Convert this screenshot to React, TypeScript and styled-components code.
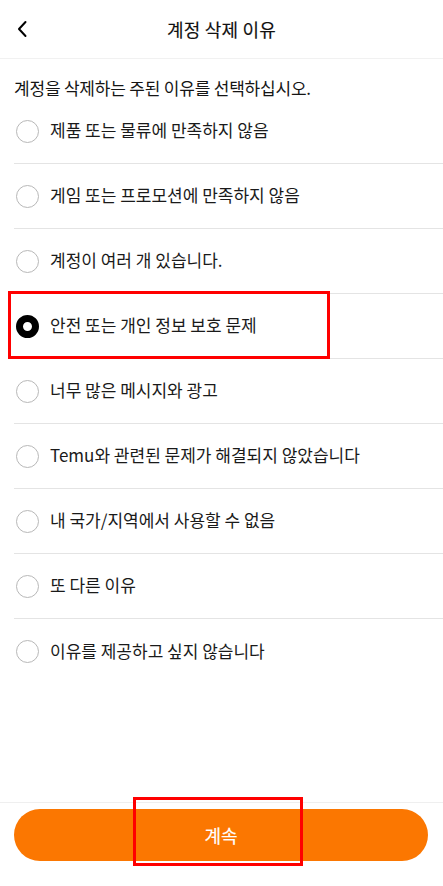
import React, { useState } from "react";
import styled, { createGlobalStyle } from "styled-components";

const Global = createGlobalStyle`
  html, body { margin: 0; padding: 0; background: #fff; }
  body { font-family: "Noto Sans CJK KR", "Noto Sans", sans-serif; color: #1a1a1a; }
  * { box-sizing: border-box; }
`;

const Page = styled.div`
  width: 443px;
  height: 886px;
  display: flex;
  flex-direction: column;
  background: #fff;
`;

const Header = styled.header`
  height: 59px;
  flex: none;
  display: grid;
  grid-template-columns: 60px 1fr 60px;
  align-items: center;
  border-bottom: 1px solid #f1f1f1;
`;

const BackButton = styled.button`
  border: 0;
  background: none;
  padding: 0 0 0 16px;
  height: 100%;
  display: flex;
  align-items: center;
  cursor: pointer;
`;

const Title = styled.h1`
  margin: 0;
  text-align: center;
  font-size: 18px;
  font-weight: 400;
  -webkit-text-stroke: 0.15px #111;
  letter-spacing: 0.2px;
  color: #111;
  padding-bottom: 1px;
`;

const Main = styled.main`
  flex: 1;
  display: flex;
  flex-direction: column;
`;

const Lead = styled.p`
  margin: 0;
  padding: 18px 14px 0;
  font-size: 17px;
  line-height: 22px;
  letter-spacing: -0.2px;
  color: #151515;
`;

const List = styled.ul`
  list-style: none;
  margin: 0;
  padding: 0 0 0 14px;
`;

const Row = styled.li<{ $last?: boolean }>`
  position: relative;
  height: 65px;
  display: flex;
  align-items: center;
  gap: 11px;
  padding-left: 2px;
  border-bottom: ${(p) => (p.$last ? "0" : "1px solid #e4e4e4")};
  cursor: pointer;
`;

const Radio = styled.span<{ $checked?: boolean }>`
  flex: none;
  width: 23px;
  height: 23px;
  border-radius: 50%;
  border: ${(p) => (p.$checked ? "7px solid #000" : "1.5px solid #b8b8b8")};
  background: #fff;
`;

const Label = styled.span`
  font-size: 17px;
  letter-spacing: 0;
  color: #1a1a1a;
  line-height: 22px;
  margin-bottom: 2px;
`;

const Mark = styled.span<{ $l: number; $t: number; $w: number; $h: number }>`
  position: absolute;
  left: ${(p) => p.$l}px;
  top: ${(p) => p.$t}px;
  width: ${(p) => p.$w}px;
  height: ${(p) => p.$h}px;
  border: 3px solid #ff0000;
  pointer-events: none;
`;

const Footer = styled.footer`
  flex: none;
  border-top: 1px solid #efefef;
  padding: 6px 15px 25px 14px;
`;

const Continue = styled.button`
  position: relative;
  width: 100%;
  height: 52px;
  border: 0;
  border-radius: 26px;
  background: #fb7701;
  color: #fff;
  font-family: "Noto Sans CJK KR", "Noto Sans", sans-serif;
  font-size: 18px;
  font-weight: 400;
  -webkit-text-stroke: 0.2px #fff;
  letter-spacing: 0;
  cursor: pointer;
`;

const reasons = [
  "제품 또는 물류에 만족하지 않음",
  "게임 또는 프로모션에 만족하지 않음",
  "계정이 여러 개 있습니다.",
  "안전 또는 개인 정보 보호 문제",
  "너무 많은 메시지와 광고",
  "Temu와 관련된 문제가 해결되지 않았습니다",
  "내 국가/지역에서 사용할 수 없음",
  "또 다른 이유",
  "이유를 제공하고 싶지 않습니다",
];

export default function App() {
  const [selected, setSelected] = useState(3);
  return (
    <Page>
      <Global />
      <Header>
        <BackButton aria-label="뒤로">
          <svg width="12" height="18" viewBox="0 0 12 18" fill="none">
            <polyline points="9.5,2 3,9 9.5,16" stroke="#000" strokeWidth="2" strokeLinecap="round" strokeLinejoin="round" />
          </svg>
        </BackButton>
        <Title>계정 삭제 이유</Title>
        <span />
      </Header>
      <Main>
        <Lead>계정을 삭제하는 주된 이유를 선택하십시오.</Lead>
        <List>
          {reasons.map((r, i) => (
            <Row key={r} $last={i === reasons.length - 1} onClick={() => setSelected(i)}>
              <Radio $checked={selected === i} />
              <Label>{r}</Label>
              {i === 3 && <Mark $l={-6} $t={-3} $w={322} $h={68} />}
            </Row>
          ))}
        </List>
      </Main>
      <Footer>
        <Continue>
          계속
          <Mark $l={119} $t={-12} $w={170} $h={69} />
        </Continue>
      </Footer>
    </Page>
  );
}
